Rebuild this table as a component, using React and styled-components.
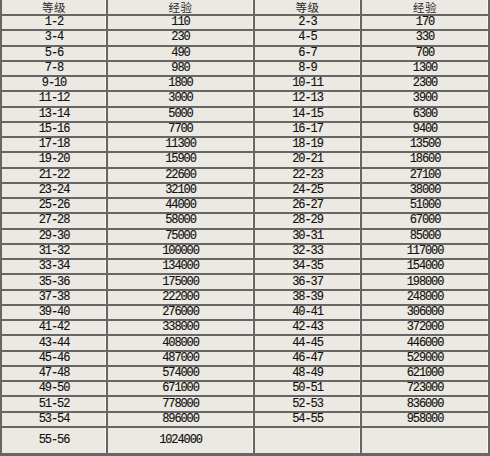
import React from "react";
import styled, { createGlobalStyle } from "styled-components";

const GlobalStyle = createGlobalStyle`
  html, body {
    margin: 0;
    padding: 0;
    background: #ffffff;
  }
`;

const Table = styled.div`
  display: grid;
  grid-template-columns: 104px 145px 105px 126px;
  grid-template-rows: 14px repeat(27, 1fr) 25px;
  gap: 2px;
  width: 490px;
  height: 456px;
  box-sizing: border-box;
  padding: 0 2px 3px 2px;
  background: #666666;
`;

const Cell = styled.div`
  display: flex;
  align-items: center;
  justify-content: center;
  background: #ece9e2;
  box-shadow: inset -1px 0 0 #f7f6f2;
  color: #111111;
  font-family: "Liberation Mono", "Noto Sans CJK SC", monospace;
  font-size: 12px;
  letter-spacing: -1.1px;
  -webkit-text-stroke: 0.15px #111111;
  line-height: 13px;
  white-space: nowrap;
`;

const HeadCell = styled(Cell)`
  font-family: "Noto Sans CJK SC", sans-serif;
  font-size: 11.5px;
  line-height: 14px;
  letter-spacing: 0.5px;
  -webkit-text-stroke: 0;
  color: #2a2a2a;
`;

const left = [
  ["1-2", "110"], ["3-4", "230"], ["5-6", "490"], ["7-8", "980"],
  ["9-10", "1800"], ["11-12", "3000"], ["13-14", "5000"], ["15-16", "7700"],
  ["17-18", "11300"], ["19-20", "15900"], ["21-22", "22600"], ["23-24", "32100"],
  ["25-26", "44000"], ["27-28", "58000"], ["29-30", "75000"], ["31-32", "100000"],
  ["33-34", "134000"], ["35-36", "175000"], ["37-38", "222000"], ["39-40", "276000"],
  ["41-42", "338000"], ["43-44", "408000"], ["45-46", "487000"], ["47-48", "574000"],
  ["49-50", "671000"], ["51-52", "778000"], ["53-54", "896000"], ["55-56", "1024000"],
];

const right = [
  ["2-3", "170"], ["4-5", "330"], ["6-7", "700"], ["8-9", "1300"],
  ["10-11", "2300"], ["12-13", "3900"], ["14-15", "6300"], ["16-17", "9400"],
  ["18-19", "13500"], ["20-21", "18600"], ["22-23", "27100"], ["24-25", "38000"],
  ["26-27", "51000"], ["28-29", "67000"], ["30-31", "85000"], ["32-33", "117000"],
  ["34-35", "154000"], ["36-37", "198000"], ["38-39", "248000"], ["40-41", "306000"],
  ["42-43", "372000"], ["44-45", "446000"], ["46-47", "529000"], ["48-49", "621000"],
  ["50-51", "723000"], ["52-53", "836000"], ["54-55", "958000"], ["", ""],
];

export default function App() {
  return (
    <>
      <GlobalStyle />
      <Table>
        <HeadCell>等级</HeadCell>
        <HeadCell>经验</HeadCell>
        <HeadCell>等级</HeadCell>
        <HeadCell>经验</HeadCell>
        {left.map((row, i) => (
          <React.Fragment key={i}>
            <Cell>{row[0]}</Cell>
            <Cell>{row[1]}</Cell>
            <Cell>{right[i][0]}</Cell>
            <Cell>{right[i][1]}</Cell>
          </React.Fragment>
        ))}
      </Table>
    </>
  );
}
